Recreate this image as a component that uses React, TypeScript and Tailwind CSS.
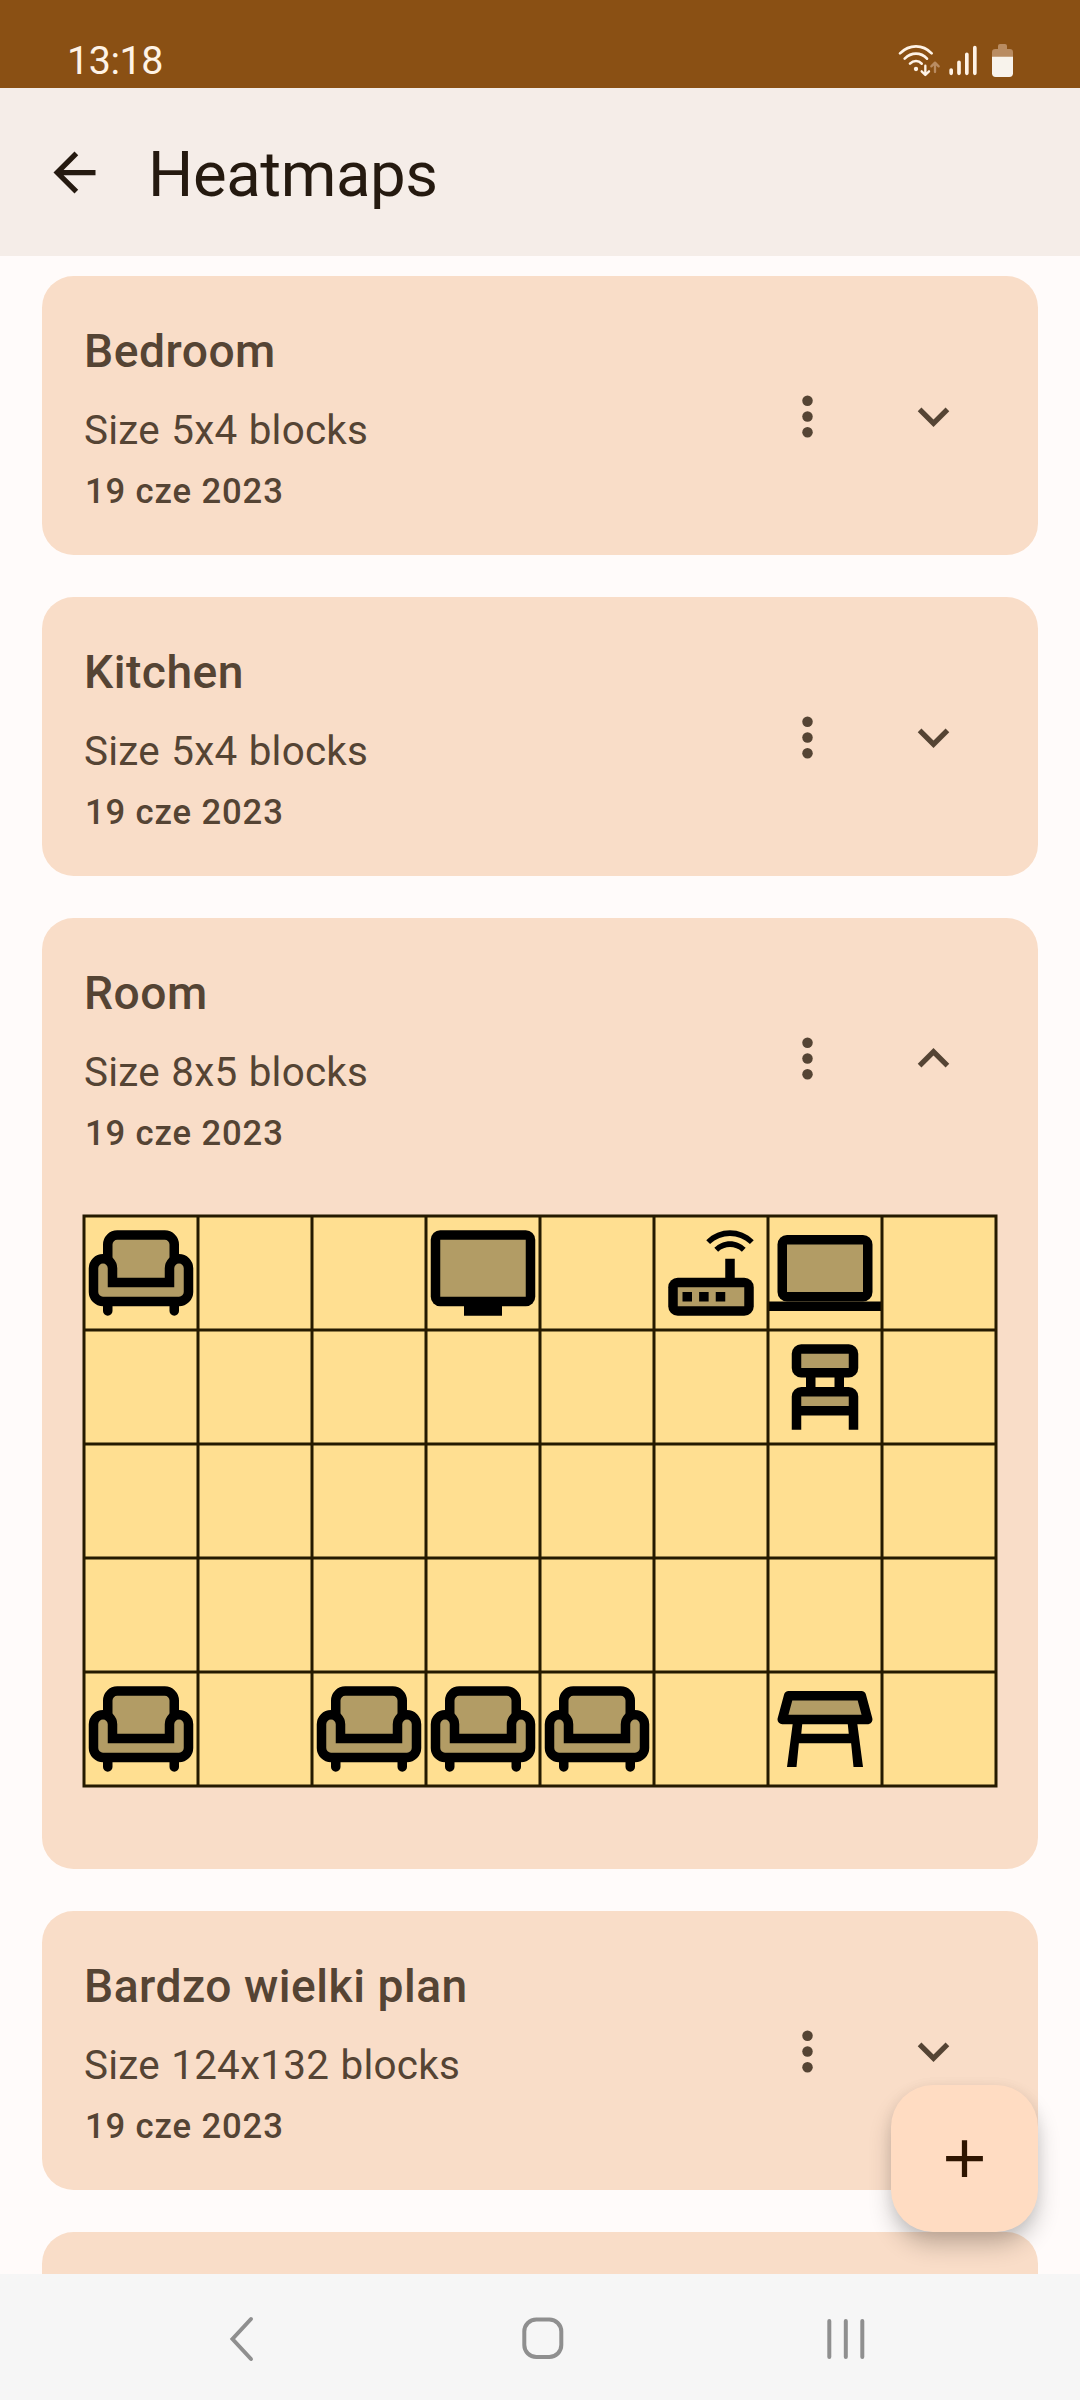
import React from "react";

type Item = "sofa" | "tv" | "router" | "laptop" | "chair" | "table";

interface Plan {
  name: string;
  size: string;
  date: string;
  blocks?: { columns: number; rows: number; items: Record<string, Item> };
}

const plans: Plan[] = [
  { name: "Bedroom", size: "5x4", date: "19 cze 2023" },
  { name: "Kitchen", size: "5x4", date: "19 cze 2023" },
  {
    name: "Room",
    size: "8x5",
    date: "19 cze 2023",
    blocks: {
      columns: 8,
      rows: 5,
      items: {
        "0-0": "sofa",
        "3-0": "tv",
        "5-0": "router",
        "6-0": "laptop",
        "6-1": "chair",
        "0-4": "sofa",
        "2-4": "sofa",
        "3-4": "sofa",
        "4-4": "sofa",
        "6-4": "table",
      },
    },
  },
  { name: "Bardzo wielki plan", size: "124x132", date: "19 cze 2023" },
];

const CELL = 114;
const TINT = "#b29c65";

const drawings: Record<Item, React.ReactNode> = {
  sofa: (
    <>
      <path d="M5 14V6a2 2 0 0 1 2-2h10a2 2 0 0 1 2 2v8z" fill={TINT} />
      <g stroke="#000" strokeWidth="2">
        <path d="M5 9.5V6a2 2 0 0 1 2-2h10a2 2 0 0 1 2 2v3.5" fill="none" />
        <path d="M5 18v2M19 18v2" strokeLinecap="round" />
        <path d="M6 14v-3a2 2 0 0 0-4 0v5a2 2 0 0 0 2 2h16a2 2 0 0 0 2-2v-5a2 2 0 0 0-4 0v3z" fill={TINT} />
      </g>
    </>
  ),
  tv: (
    <>
      <rect x="1" y="3" width="22" height="16" rx="2" />
      <path d="M8 18h8v3H8z" />
      <path d="M3 5h18v12H3z" fill={TINT} />
    </>
  ),
  router: (
    <>
      <path d="M20.2 5.9l.8-.8C19.6 3.7 17.8 3 16 3s-3.600.7-5 2.100l.8.8C13 4.800 14.500 4.200 16 4.200s3 .6 4.200 1.700zM19.300 6.700c-.9-.9-2.100-1.400-3.300-1.400s-2.400.5-3.300 1.400l.8.8c.7-.7 1.600-1 2.500-1s1.800.3 2.500 1z" />
      <rect x="3" y="13" width="18" height="8" rx="2" />
      <path d="M15 9h2v5h-2z" />
      <path d="M5 15h14v4H5z" fill={TINT} />
      <path d="M6 16h2v2H6zM9.500 16h2v2h-2zM13 16h2v2h-2z" />
    </>
  ),
  laptop: (
    <>
      <rect x="2" y="4" width="20" height="14" rx="2" />
      <path d="M0 18h24v2H0z" />
      <path d="M4 6h16v10H4z" fill={TINT} />
    </>
  ),
  chair: (
    <>
      <rect x="5" y="3" width="14" height="7" rx="2" />
      <path d="M8 9.500h2V13H8zM14 9.500h2V13h-2zM5 21v-7a2 2 0 0 1 2-2h10a2 2 0 0 1 2 2v7h-2v-3H7v3z" />
      <path d="M7 5h10v3H7zM7 14h10v2H7z" fill={TINT} />
    </>
  ),
  table: (
    <>
      <path d="M4.350 5h15.300L21 10H3z" fill={TINT} stroke="#000" strokeWidth="2" strokeLinejoin="round" />
      <path d="M5.250 10.500h2L7 13h10l-.25-2.500h2L20 20h-2l-.5-5h-11L6 20H4z" />
    </>
  ),
};

function MoreIcon() {
  return (
    <svg className="size-[63px]" viewBox="0 0 24 24" fill="currentColor">
      <circle cx="12" cy="6" r="2" />
      <circle cx="12" cy="12" r="2" />
      <circle cx="12" cy="18" r="2" />
    </svg>
  );
}

function ChevronIcon({ open }: { open: boolean }) {
  return (
    <svg className="size-[63px]" viewBox="0 0 24 24" fill="currentColor">
      <path d={open ? "M12 8l-6 6 1.410 1.410L12 10.830l4.590 4.580L18 14z" : "M16.590 8.590L12 13.170 7.410 8.590 6 10l6 6 6-6z"} />
    </svg>
  );
}

function Heatmap({ columns, rows, items }: NonNullable<Plan["blocks"]>) {
  const w = columns * CELL;
  const h = rows * CELL;
  const lines = [
    ...Array.from({ length: columns + 1 }, (_, i) => `M${i * CELL} -1.500V${h + 1.5}`),
    ...Array.from({ length: rows + 1 }, (_, i) => `M-1.500 ${i * CELL}H${w + 1.5}`),
  ].join("");
  return (
    <div className="relative mx-[42px] mt-[60px] grid grid-cols-8 bg-[#ffdf91]">
      {Array.from({ length: columns * rows }, (_, i) => {
        const item = items[`${i % columns}-${Math.floor(i / columns)}`];
        return (
          <div key={i} className="size-[114px]">
            {item && (
              <svg className="size-full" viewBox="0 0 24 24">
                {drawings[item]}
              </svg>
            )}
          </div>
        );
      })}
      <svg className="absolute inset-0 size-full overflow-visible" viewBox={`0 0 ${w} ${h}`}>
        <path d={lines} stroke="#251a00" strokeWidth="3" fill="none" />
      </svg>
    </div>
  );
}

function PlanCard({ plan }: { plan: Plan }) {
  return (
    <article
      className={`shrink-0 rounded-[31.5px] bg-[#f9ddc8] text-[#554434] ${plan.blocks ? "h-[951px]" : "h-[279px]"}`}
    >
      <div className="flex items-start justify-between px-[42px] pt-[41px]">
        <div className="flex flex-col">
          <h2 className="text-[46.2px] leading-[69px] font-medium tracking-[0.5px]">{plan.name}</h2>
          <p className="mt-[16px] text-[40.4px] leading-[58px] tracking-[0.25px] [word-spacing:1px]">
            Size {plan.size} blocks
          </p>
          <p className="mt-[8px] pl-px text-[34.65px] leading-[46px] font-medium tracking-[0.87px]">{plan.date}</p>
        </div>
        <div className="mt-[36px] flex">
          <button className="flex size-[126px] items-center justify-center" aria-label="More">
            <MoreIcon />
          </button>
          <button className="flex size-[126px] items-center justify-center" aria-label="Toggle">
            <ChevronIcon open={!!plan.blocks} />
          </button>
        </div>
      </div>
      {plan.blocks && <Heatmap {...plan.blocks} />}
    </article>
  );
}

function StatusBar() {
  return (
    <header className="flex h-[88px] shrink-0 items-start justify-between bg-[#8a5014] pr-[63px] pl-[67px] text-[#fff3e6]">
      <span className="mt-[38px] text-[39.4px] leading-[46px] tracking-[-0.4px]">13:18</span>
      <svg className="mt-10 h-10 w-[120px]" viewBox="111 60 360 120" fill="none" stroke="currentColor" strokeLinecap="round">
        <g strokeWidth="8">
          <path d="M120 100Q141 79 168 79T215 100" />
          <path d="M134 116Q149 101 168 101T201 116" />
          <path d="M150 131Q158 123 168 123T185 131" />
        </g>
        <circle cx="168" cy="147" r="6.500" fill="currentColor" stroke="none" />
        <path d="M196 137V164M185 154L196 165L207 154" strokeWidth="7" strokeLinejoin="round" />
        <path d="M225 156V129M214 139L225 128L236 139" strokeWidth="7" strokeLinejoin="round" stroke="#b98c62" />
        <path d="M273.500 150V160M297 127V160M320.500 103V160M344.500 83V160" strokeWidth="11" />
        <path d="M414 87V78Q414 72 420 72H435Q441 72 441 78V87H449Q459 87 459 97V111H396V97Q396 87 406 87Z" fill="#b98c62" stroke="none" />
        <path d="M396 110H459V160Q459 171 448 171H407Q396 171 396 160Z" fill="#f8f3ec" stroke="none" />
      </svg>
    </header>
  );
}

function NavigationBar() {
  return (
    <nav className="flex h-[126px] shrink-0 items-center justify-between bg-[#f6f6f6] pt-1 pr-[204px] pl-[212px]">
      <svg className="size-[60px]" viewBox="0 0 60 60" fill="none" stroke="#8f8f8f" strokeWidth="4" strokeLinecap="round" strokeLinejoin="miter">
        <path d="M39 10L20.500 30L39 50" />
      </svg>
      <svg className="size-[60px]" viewBox="0 0 60 60" fill="none" stroke="#8f8f8f" strokeWidth="4">
        <rect x="10.300" y="10.500" width="37" height="37.500" rx="12" />
      </svg>
      <svg className="size-[60px]" viewBox="0 0 60 60" fill="none" stroke="#8f8f8f" strokeWidth="4" strokeLinecap="round">
        <path d="M13.300 12V48M29.800 12V48M46.300 12V48" />
      </svg>
    </nav>
  );
}

export default function App() {
  return (
    <div className="flex h-[2400px] w-[1080px] flex-col overflow-hidden bg-[#fffbfa] font-['Roboto',sans-serif]">
      <StatusBar />
      <div className="flex h-[168px] shrink-0 items-center bg-[#f5ede8] pl-[43px] text-[#251a10]">
        <svg className="size-[63px]" viewBox="0 0 24 24" fill="currentColor">
          <path d="M20 11H7.830l5.590-5.590L12 4l-8 8 8 8 1.410-1.410L7.830 13H20z" />
        </svg>
        <h1 className="mt-[6px] ml-[42px] text-[63.5px] leading-[80px] tracking-[-0.4px]">Heatmaps</h1>
      </div>
      <main className="relative min-h-0 flex-1 overflow-hidden">
        <div className="flex flex-col gap-[42px] px-[42px] pt-5">
          {plans.map((plan) => (
            <PlanCard key={plan.name} plan={plan} />
          ))}
          <div className="h-[279px] shrink-0 rounded-[31.5px] bg-[#f9ddc8]" />
        </div>
        <button
          aria-label="Add"
          className="absolute right-[42px] bottom-[42px] flex size-[147px] items-center justify-center rounded-[42px] bg-[#ffdcc2] text-[#2e1500] shadow-[0_14px_24px_-2px_rgba(0,0,0,0.24),0_2px_14px_rgba(0,0,0,0.06)]"
        >
          <svg className="size-[63px]" viewBox="0 0 24 24" fill="currentColor">
            <path d="M19 13h-6v6h-2v-6H5v-2h6V5h2v6h6z" />
          </svg>
        </button>
      </main>
      <NavigationBar />
    </div>
  );
}
